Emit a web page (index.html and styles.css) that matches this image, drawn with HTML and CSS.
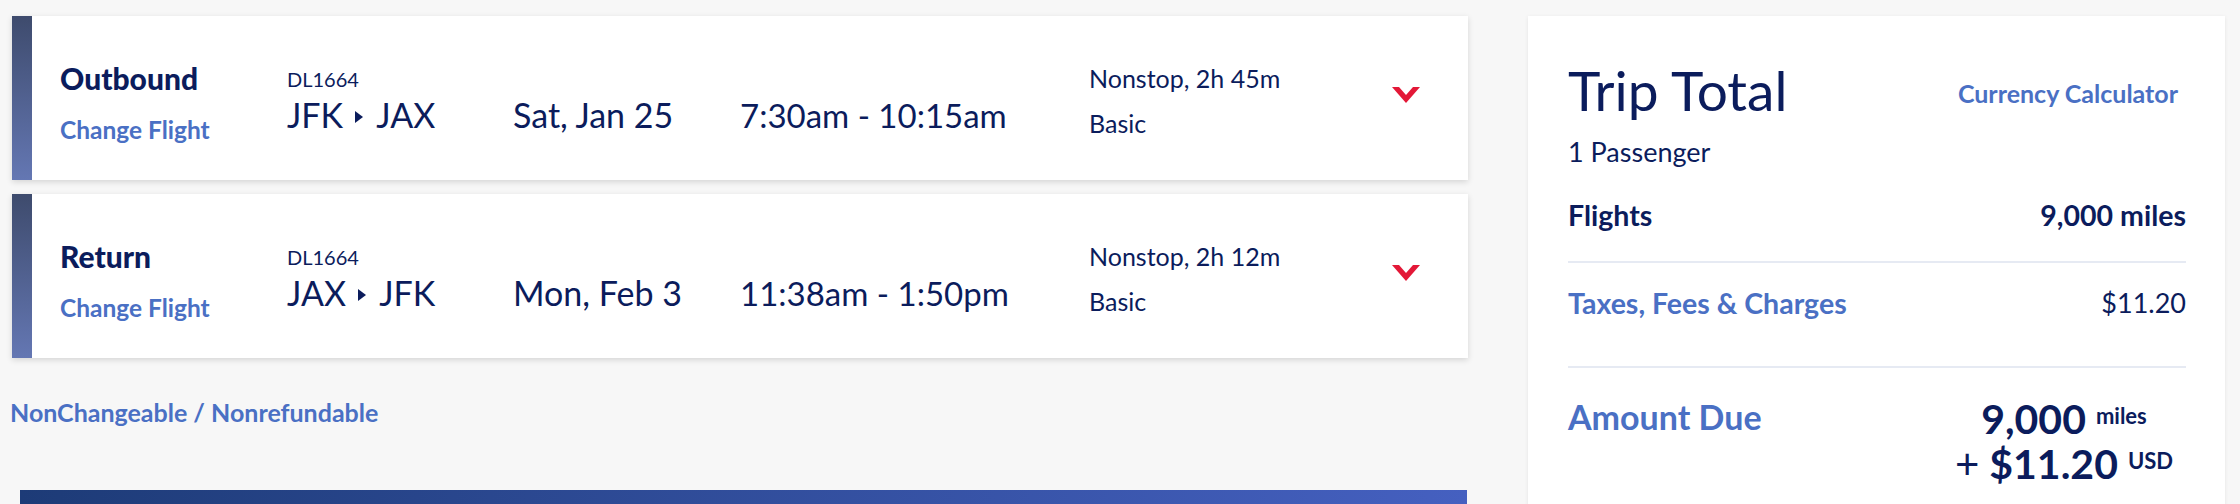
FILE: index.html
```html
<!DOCTYPE html>
<html lang="en">
<head>
<meta charset="utf-8">
<title>Trip Summary</title>
<link rel="stylesheet" href="styles.css">
</head>
<body>
<div class="page">
  <main class="flights">
    <section class="card">
      <div class="card-bar"></div>
      <div class="card-grid">
        <div class="col col-label">
          <div class="leg">Outbound</div>
          <a class="change">Change Flight</a>
        </div>
        <div class="col col-route">
          <div class="flight-no">DL1664</div>
          <div class="route">JFK<span class="arrow"></span>JAX</div>
        </div>
        <div class="col col-big col-date">Sat, Jan 25</div>
        <div class="col col-big">7:30am - 10:15am</div>
        <div class="col col-info">
          <div class="info">Nonstop, 2h 45m</div>
          <div class="info info-second">Basic</div>
        </div>
        <div class="col col-chev">
          <svg class="chev" width="28" height="16" viewBox="0 0 28 16"><polygon points="0,0 7,0 14,8 21,0 28,0 14,16" fill="#e31837"/></svg>
        </div>
      </div>
    </section>
    <section class="card">
      <div class="card-bar"></div>
      <div class="card-grid">
        <div class="col col-label">
          <div class="leg">Return</div>
          <a class="change">Change Flight</a>
        </div>
        <div class="col col-route">
          <div class="flight-no">DL1664</div>
          <div class="route">JAX<span class="arrow"></span>JFK</div>
        </div>
        <div class="col col-big col-date">Mon, Feb 3</div>
        <div class="col col-big">11:38am - 1:50pm</div>
        <div class="col col-info">
          <div class="info">Nonstop, 2h 12m</div>
          <div class="info info-second">Basic</div>
        </div>
        <div class="col col-chev">
          <svg class="chev" width="28" height="16" viewBox="0 0 28 16"><polygon points="0,0 7,0 14,8 21,0 28,0 14,16" fill="#e31837"/></svg>
        </div>
      </div>
    </section>
    <a class="fare-rule">NonChangeable / Nonrefundable</a>
    <div class="banner"></div>
  </main>
  <aside class="total">
    <div class="total-head">
      <h1 class="total-title">Trip Total</h1>
      <a class="calc">Currency Calculator</a>
    </div>
    <div class="pax">1 Passenger</div>
    <div class="row row-flights">
      <span>Flights</span>
      <span>9,000 miles</span>
    </div>
    <div class="row row-taxes">
      <a class="taxes">Taxes, Fees &amp; Charges</a>
      <span class="tax-amt">$11.20</span>
    </div>
    <div class="row row-due">
      <div class="due-label">Amount Due</div>
      <div class="due-amt">
        <div class="due-line">9,000 <span class="sup">miles</span></div>
        <div class="due-line"><span class="plus">+</span> $11.20 <span class="sup">USD</span></div>
      </div>
    </div>
  </aside>
</div>
</body>
</html>
```
FILE: styles.css
```css
* { box-sizing: border-box; }
html, body { margin: 0; padding: 0; }
body {
  background: #f7f7f7;
  font-family: Lato, "Open Sans", sans-serif;
  color: #0b1c5c;
  height: 504px;
  overflow: hidden;
}
a { color: #4a70c4; text-decoration: none; }

.page {
  display: flex;
  gap: 60px;
  padding: 16px 15px 0 12px;
}

.flights {
  width: 1456px;
  flex: none;
  display: flex;
  flex-direction: column;
}

.card {
  display: flex;
  height: 164px;
  background: #fff;
  box-shadow: 0 2px 6px rgba(0, 0, 0, 0.14);
}
.card + .card { margin-top: 14px; }

.card-bar {
  width: 20px;
  flex: none;
  background: linear-gradient(to bottom, #3e4b6d, #6477b3);
}

.card-grid {
  display: grid;
  grid-template-columns: 227px 226px 227px 349px 303px 28px;
  align-items: start;
  padding-left: 28px;
}

.col-label { padding-top: 44px; }
.leg {
  font-size: 30px;
  line-height: 36px;
  font-weight: 900;
}
.change {
  display: block;
  margin-top: 18px;
  font-size: 24.5px;
  line-height: 32px;
  font-weight: 700;
}

.col-route { padding-top: 51px; }
.flight-no {
  font-size: 20px;
  line-height: 24px;
}
.route {
  margin-top: 4px;
  font-size: 34px;
  line-height: 40px;
}
.arrow {
  display: inline-block;
  width: 0;
  height: 0;
  border-left: 8px solid #0b1c5c;
  border-top: 6px solid transparent;
  border-bottom: 6px solid transparent;
  margin: 0 13px 0 12px;
  vertical-align: 5px;
}

.col-big {
  padding-top: 79px;
  font-size: 33px;
  line-height: 40px;
}
.col-date { font-size: 34px; }

.col-info { padding-top: 47px; }
.info {
  font-size: 25px;
  line-height: 30px;
}
.info-second { margin-top: 15px; }

.col-chev { padding-top: 71px; }
.chev { display: block; }

.fare-rule {
  display: block;
  margin: 39px 0 0 -2px;
  font-size: 25px;
  line-height: 30px;
  font-weight: 700;
}

.banner {
  margin: 63px 1px 0 8px;
  height: 60px;
  background: linear-gradient(to right, #1d3b77, #4560c0);
}

.total {
  width: 697px;
  flex: none;
  height: 600px;
  background: #fff;
  box-shadow: 0 1px 4px rgba(0, 0, 0, 0.08);
  padding: 43px 39px 0 40px;
}

.total-head {
  display: flex;
  justify-content: space-between;
  align-items: flex-start;
}
.total-title {
  margin: 0;
  font-size: 55px;
  line-height: 62px;
  font-weight: 400;
}
.calc {
  margin-top: 19px;
  margin-right: 8px;
  font-size: 25px;
  line-height: 30px;
  font-weight: 700;
}

.pax {
  margin-top: 15px;
  font-size: 27px;
  line-height: 32px;
}

.row {
  display: flex;
  justify-content: space-between;
  font-size: 27px;
  line-height: 32px;
}
.row-flights {
  margin-top: 31px;
  padding-bottom: 30px;
  border-bottom: 2px solid #e6eaf3;
  font-weight: 700;
  font-size: 28.5px;
}
.row-taxes {
  padding-top: 24px;
  padding-bottom: 47px;
  border-bottom: 2px solid #e6eaf3;
}
.taxes { font-weight: 700; font-size: 28.5px; }

.row-due {
  padding-top: 29px;
  align-items: flex-start;
}
.due-label {
  font-size: 34px;
  line-height: 40px;
  font-weight: 700;
  color: #4a70c4;
}
.due-amt {
  width: 244px;
  margin-top: -1px;
  text-align: center;
  font-weight: 700;
}
.due-line {
  font-size: 41px;
  line-height: 45px;
}
.sup {
  font-size: 22px;
  line-height: 1;
  vertical-align: 10px;
}
.plus {
  font-size: 42px;
  line-height: 1;
  font-weight: 400;
}
```
